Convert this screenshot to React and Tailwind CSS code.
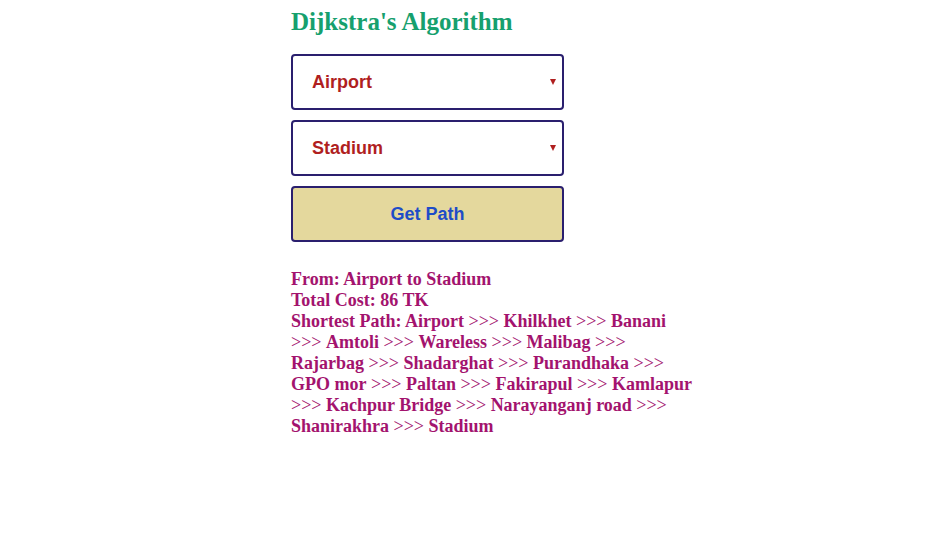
import React, { useState } from 'react';

const path = ['Airport', 'Khilkhet', 'Banani', 'Amtoli', 'Wareless', 'Malibag', 'Rajarbag', 'Shadarghat', 'Purandhaka', 'GPO mor', 'Paltan', 'Fakirapul', 'Kamlapur', 'Kachpur Bridge', 'Narayanganj road', 'Shanirakhra', 'Stadium'];

function Picker({ value, onChange }) {
  return (
    <div className="relative w-[273px] h-[56px]">
      <select
        value={value}
        onChange={e => onChange(e.target.value)}
        className="appearance-none w-full h-full bg-white border-2 border-[#2a1f6e] rounded-[4px] pl-[19px] text-[18px] font-bold text-[#b01f1f] outline-none font-['Liberation_Sans',Arial,sans-serif]"
      >
        {path.map(p => <option key={p}>{p}</option>)}
      </select>
      <div className="pointer-events-none absolute right-[8px] top-1/2 -translate-y-1/2 w-0 h-0 border-l-[3px] border-r-[3px] border-t-[6px] border-l-transparent border-r-transparent border-t-[#b01f1f]" />
    </div>
  );
}

export default function App() {
  const [from, setFrom] = useState('Airport');
  const [to, setTo] = useState('Stadium');

  return (
    <div className="w-[929px] h-[558px] bg-white font-['Liberation_Serif','Times_New_Roman',serif]">
      <div className="ml-[291px] pt-[7px] w-[404px]">
        <h1 className="text-[25px] leading-[29px] font-bold text-[#16a06e]">Dijkstra's Algorithm</h1>
        <div className="mt-[18px] flex flex-col gap-[10px]">
          <Picker value={from} onChange={setFrom} />
          <Picker value={to} onChange={setTo} />
          <button className="w-[273px] h-[56px] bg-[#e4d89d] border-2 border-[#2a1f6e] rounded-[4px] text-[18px] font-bold text-[#1e4cc8] font-['Liberation_Sans',Arial,sans-serif]">
            Get Path
          </button>
        </div>
        <div className="mt-[27px] text-[18px] leading-[21px] font-bold text-[#a3136e]">
          <div>From: {from} to {to}</div>
          <div>Total Cost: 86 TK</div>
          <div>
            Shortest Path:{' '}
            {path.map((p, i) => (
              <React.Fragment key={p}>
                {i > 0 && <span className="font-normal">{' >>> '}</span>}
                {p}
              </React.Fragment>
            ))}
          </div>
        </div>
      </div>
    </div>
  );
}
